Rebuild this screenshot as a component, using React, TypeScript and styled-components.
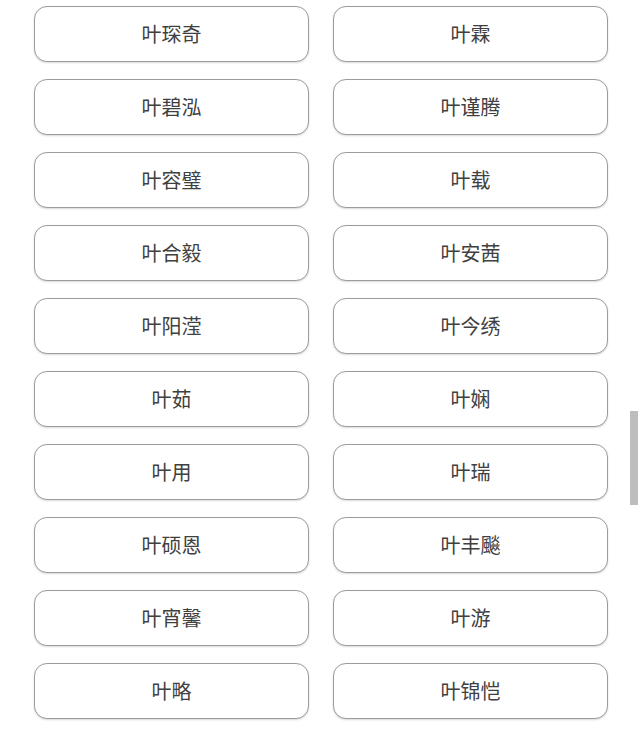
import { FC } from 'react';
import styled, { createGlobalStyle } from 'styled-components';

const names = [
	['叶琛奇', '叶霖'],
	['叶碧泓', '叶谨腾'],
	['叶容璧', '叶载'],
	['叶合毅', '叶安茜'],
	['叶阳滢', '叶今绣'],
	['叶茹', '叶娴'],
	['叶用', '叶瑞'],
	['叶硕恩', '叶丰飈'],
	['叶宵馨', '叶游'],
	['叶略', '叶锦恺'],
];

const GlobalStyle = createGlobalStyle`
	html, body {
		margin: 0;
		padding: 0;
		background: #ffffff;
		font-family: 'Noto Sans CJK SC', 'Noto Sans', sans-serif;
	}
`;

const App: FC = () => {
	return (
		<Page>
			<GlobalStyle />
			<NameGrid>
				{names.flat().map((name) => (
					<NameButton key={name}>{name}</NameButton>
				))}
			</NameGrid>
			<ScrollThumb />
		</Page>
	);
};

const Page = styled.div`
	position: relative;
	width: 640px;
	height: 733px;
	overflow: hidden;
	background: #fff;
`;

const NameGrid = styled.div`
	display: grid;
	grid-template-columns: 275px 275px;
	column-gap: 24px;
	row-gap: 17px;
	padding: 6px 0 0 34px;
`;

const NameButton = styled.div`
	box-sizing: border-box;
	height: 56px;
	padding-bottom: 2px;
	display: flex;
	align-items: center;
	justify-content: center;
	border: 1.5px solid #9c9c9c;
	border-radius: 13px;
	box-shadow: 0 1px 2px rgba(0, 0, 0, 0.15);
	background: #fff;
	color: #404040;
	font-size: 20px;
	user-select: none;
`;

const ScrollThumb = styled.div`
	position: absolute;
	left: 630px;
	top: 411px;
	width: 8px;
	height: 94px;
	background: #bdbdbd;
`;

export default App;
